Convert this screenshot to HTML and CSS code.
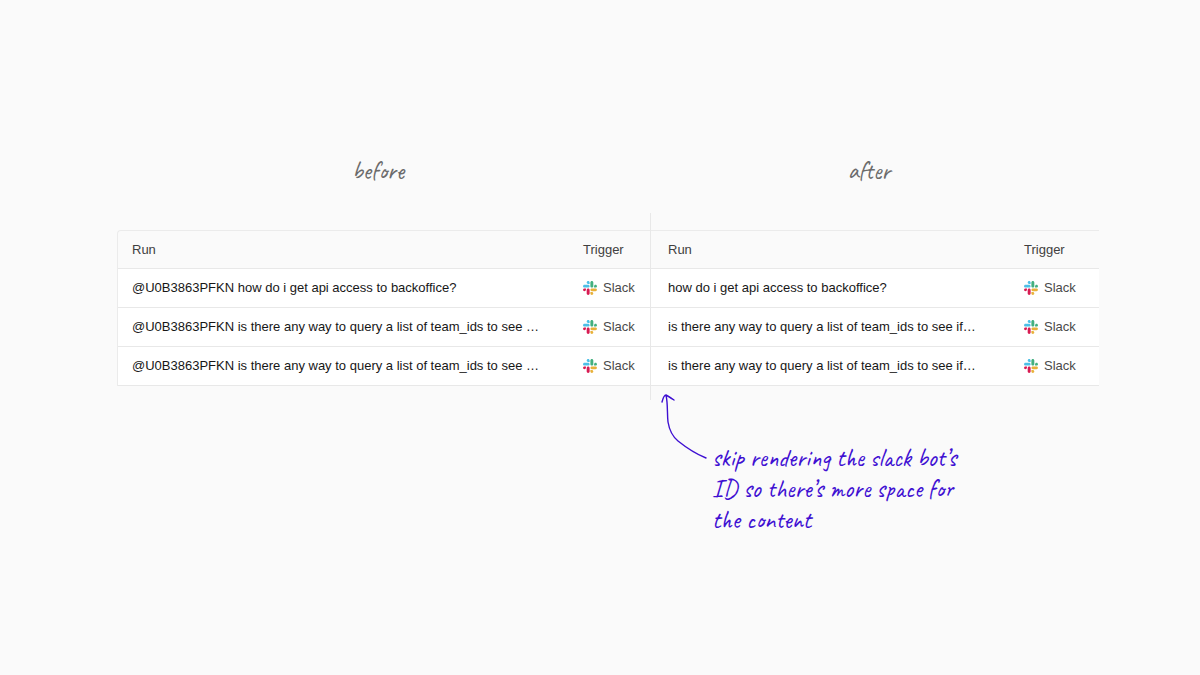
FILE: index.html
```html
<!DOCTYPE html>
<html lang="en">
<head>
<meta charset="utf-8">
<meta name="viewport" content="width=device-width, initial-scale=1">
<title>Runs: before and after</title>
<link rel="stylesheet" href="styles.css">
</head>
<body>
<svg class="sprite" aria-hidden="true">
  <symbol id="slack" viewBox="0 0 122.8 122.8">
    <path fill="#d81b52" d="M25.8 77.6c0 7.1-5.8 12.9-12.9 12.9S0 84.7 0 77.6s5.8-12.9 12.9-12.9h12.9v12.9zm6.5 0c0-7.1 5.8-12.9 12.9-12.9s12.9 5.8 12.9 12.9v32.3c0 7.1-5.8 12.9-12.9 12.9s-12.9-5.8-12.9-12.9V77.6z"/>
    <path fill="#4cbfe6" d="M45.2 25.8c-7.1 0-12.9-5.8-12.9-12.9S38.1 0 45.2 0s12.9 5.8 12.9 12.9v12.9H45.2zm0 6.5c7.1 0 12.9 5.8 12.9 12.9s-5.8 12.9-12.9 12.9H12.9C5.8 58.1 0 52.3 0 45.2s5.8-12.9 12.9-12.9h32.3z"/>
    <path fill="#43b080" d="M97 45.2c0-7.1 5.8-12.9 12.9-12.9s12.9 5.8 12.9 12.9-5.8 12.9-12.9 12.9H97V45.2zm-6.5 0c0 7.1-5.8 12.9-12.9 12.9s-12.9-5.8-12.9-12.9V12.9C64.7 5.8 70.5 0 77.6 0s12.9 5.8 12.9 12.9v32.3z"/>
    <path fill="#e8b13a" d="M77.6 97c7.1 0 12.9 5.8 12.9 12.9s-5.8 12.9-12.9 12.9-12.9-5.8-12.9-12.9V97h12.9zm0-6.5c-7.1 0-12.9-5.8-12.9-12.9s5.8-12.9 12.9-12.9h32.3c7.1 0 12.9 5.8 12.9 12.9s-5.8 12.9-12.9 12.9H77.6z"/>
  </symbol>
</svg>
<main class="board">
  <h2 class="caption" id="before">before</h2>
  <h2 class="caption" id="after">after</h2>

  <section class="panel panel-before" aria-labelledby="before">
    <table class="runs">
      <thead><tr><th scope="col">Run</th><th scope="col" class="trigger">Trigger</th></tr></thead>
      <tbody>
        <tr><td>@U0B3863PFKN how do i get api access to backoffice?</td><td class="trigger"><span class="source"><svg class="logo" aria-hidden="true"><use href="#slack"/></svg>Slack</span></td></tr>
        <tr><td>@U0B3863PFKN is there any way to query a list of team_ids to see …</td><td class="trigger"><span class="source"><svg class="logo" aria-hidden="true"><use href="#slack"/></svg>Slack</span></td></tr>
        <tr><td>@U0B3863PFKN is there any way to query a list of team_ids to see …</td><td class="trigger"><span class="source"><svg class="logo" aria-hidden="true"><use href="#slack"/></svg>Slack</span></td></tr>
      </tbody>
    </table>
  </section>

  <section class="panel panel-after" aria-labelledby="after">
    <table class="runs">
      <thead><tr><th scope="col">Run</th><th scope="col" class="trigger">Trigger</th></tr></thead>
      <tbody>
        <tr><td>how do i get api access to backoffice?</td><td class="trigger"><span class="source"><svg class="logo" aria-hidden="true"><use href="#slack"/></svg>Slack</span></td></tr>
        <tr><td>is there any way to query a list of team_ids to see if…</td><td class="trigger"><span class="source"><svg class="logo" aria-hidden="true"><use href="#slack"/></svg>Slack</span></td></tr>
        <tr><td>is there any way to query a list of team_ids to see if…</td><td class="trigger"><span class="source"><svg class="logo" aria-hidden="true"><use href="#slack"/></svg>Slack</span></td></tr>
      </tbody>
    </table>
  </section>

  <div class="note">
    <svg class="arrow" viewBox="0 0 48 68" aria-hidden="true">
      <path d="M46 65C36 61 23 52 18 48C12 43 9 35 8 29C7 20 8 11 6 2M2 9C3 5 4 2 6 2C8 3 11 5 14 7"/>
    </svg>
    <p class="note-text">skip rendering the slack bot’s<br>ID so there’s more space for<br>the content</p>
  </div>
</main>
</body>
</html>
```
FILE: styles.css
```css
* { box-sizing: border-box; }

body {
  margin: 0;
  background: #fafafa;
  color: #171717;
  font: 13px/20px "Liberation Sans", Arial, sans-serif;
}

.sprite {
  position: absolute;
  width: 0;
  height: 0;
}

.board {
  display: grid;
  grid-template-columns: 533fr 449fr;
  padding: 156px 101px 0 117px;
}

.caption {
  margin: 0;
  padding: 0 11px 27px 0;
  text-align: center;
  color: #6b6b6b;
  font: 400 25px/30px Caveat, cursive;
}

.panel { padding: 17px 0 14px; }

.panel-after { border-left: 1px solid #e8e8e8; }

.runs {
  width: 100%;
  table-layout: fixed;
  border-collapse: separate;
  border-spacing: 0;
  border-top: 1px solid #ebebeb;
}

.panel-before .runs {
  border-left: 1px solid #ebebeb;
  border-top-left-radius: 4px;
}

.runs th,
.runs td {
  height: 39px;
  padding: 0 0 0 14px;
  border-bottom: 1px solid #e8e8e8;
  text-align: left;
  vertical-align: middle;
  white-space: nowrap;
}

.runs th {
  height: 38px;
  color: #404040;
  font-weight: 400;
}

.runs td { background: #fff; }

.panel-after .runs th,
.panel-after .runs td { padding-left: 17px; }

.runs .trigger,
.panel-after .runs .trigger {
  width: 67px;
  padding-left: 0;
}

.panel-after .runs .trigger { width: 75px; }

.source {
  display: flex;
  align-items: center;
  gap: 6px;
  color: #4a4a4a;
}

.logo {
  width: 14px;
  height: 14px;
}

.note {
  grid-column: 2;
  display: flex;
  gap: 4px;
  margin-top: -7px;
  padding-left: 10px;
  color: #3f10d2;
}

.arrow {
  flex: none;
  width: 48px;
  height: 68px;
  fill: none;
  stroke: currentColor;
  stroke-width: 1.4;
  stroke-linecap: round;
  stroke-linejoin: round;
}

.note-text {
  margin: 50px 0 0;
  font: 400 25px/31px Caveat, cursive;
}
```
